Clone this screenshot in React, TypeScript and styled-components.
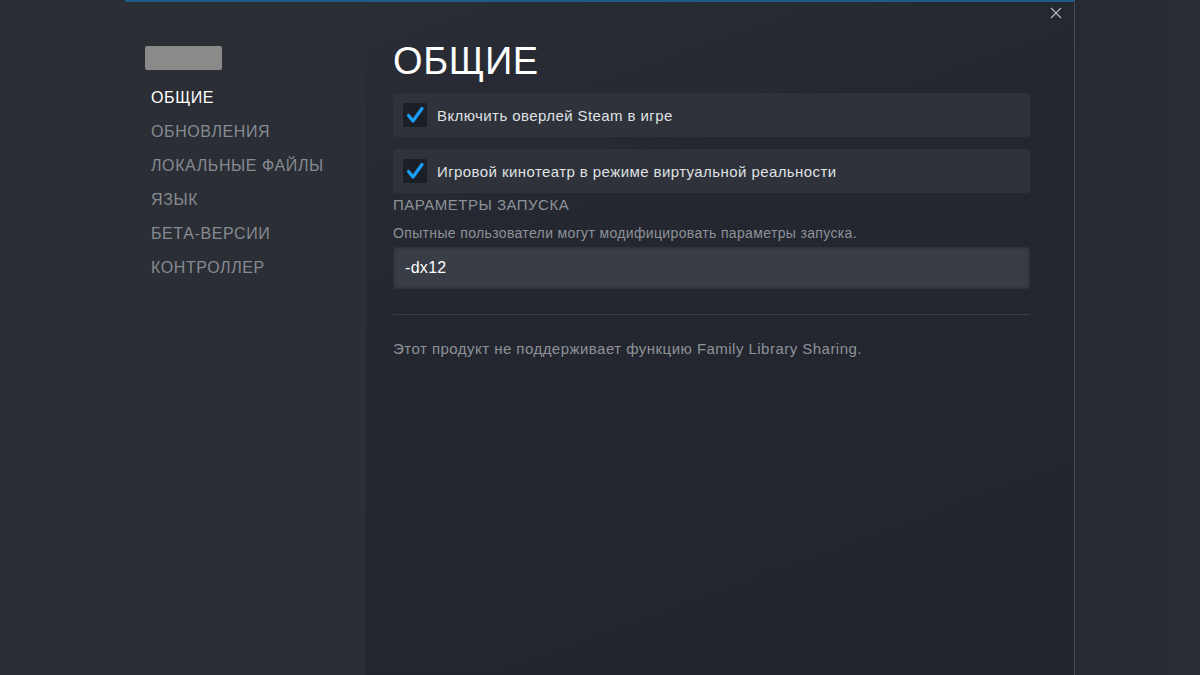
import { FC } from "react";
import styled, { createGlobalStyle } from "styled-components";

const GlobalStyle = createGlobalStyle`
  html, body { margin: 0; padding: 0; }
  body {
    width: 1200px;
    height: 675px;
    overflow: hidden;
    background: #282b31;
    font-family: "Liberation Sans", Arial, sans-serif;
  }
`;

const navItems = ["ОБЩИЕ", "ОБНОВЛЕНИЯ", "ЛОКАЛЬНЫЕ ФАЙЛЫ", "ЯЗЫК", "БЕТА-ВЕРСИИ", "КОНТРОЛЛЕР"];
const options = ["Включить оверлей Steam в игре", "Игровой кинотеатр в режиме виртуальной реальности"];

const Page = styled.div`
  display: flex;
  width: 1200px;
  height: 675px;
`;

const Backdrop = styled.div<{ $w: number; $bg: string }>`
  width: ${(p) => p.$w}px;
  flex-shrink: 0;
  background: ${(p) => p.$bg};
`;

const Dialog = styled.div`
  display: flex;
  width: 950px;
  height: 100%;
  flex-shrink: 0;
  border-top: 2px solid #1d5b88;
  border-right: 1px solid #464a52;
  box-sizing: border-box;
`;

const Nav = styled.nav`
  width: 241px;
  flex-shrink: 0;
  background: #2b2e34;
  padding: 44px 0 0 20px;
  box-sizing: border-box;
`;

const Blurred = styled.div`
  width: 77px;
  height: 24px;
  background: #8a8a8a;
  border-radius: 2px;
  filter: blur(0.6px);
  margin-bottom: 11px;
`;

const NavItem = styled.div<{ $active?: boolean }>`
  padding-left: 6px;
  height: 34px;
  line-height: 34px;
  font-size: 16px;
  letter-spacing: 0.6px;
  color: ${(p) => (p.$active ? "#ffffff" : "#868a91")};
`;

const Content = styled.main`
  position: relative;
  flex: 1;
  background: linear-gradient(160deg, #2a2d35 0%, #24272f 35%, #22252e 100%);
  padding: 36px 44px 0 27px;
  box-sizing: border-box;
`;

const Close = styled.div`
  position: absolute;
  top: 4px;
  right: 11px;
  width: 14px;
  height: 14px;
`;

const Title = styled.h1`
  margin: 0 0 9px;
  font-size: 38px;
  font-weight: 400;
  letter-spacing: 0.6px;
  line-height: 46px;
  color: #ffffff;
`;

const OptionRow = styled.div`
  display: flex;
  align-items: center;
  gap: 10px;
  height: 44px;
  padding-left: 10px;
  margin-bottom: 12px;
  background: #2f323a;
  border-radius: 3px;
`;

const Check = styled.div`
  width: 24px;
  height: 24px;
  background: #1c1f26;
  border-radius: 2px;
  display: flex;
  align-items: center;
  justify-content: center;
`;

const OptionText = styled.span`
  font-size: 15px;
  letter-spacing: 0.42px;
  color: #dfe1e3;
`;

const SectionLabel = styled.div`
  margin-top: -9px;
  font-size: 15px;
  letter-spacing: 0.5px;
  color: #8d9299;
  line-height: 18px;
`;

const Hint = styled.div`
  margin-top: 11px;
  font-size: 14px;
  color: #8d9299;
  line-height: 16px;
  letter-spacing: 0.35px;
`;

const Input = styled.div`
  margin-top: 6px;
  height: 42px;
  display: flex;
  align-items: center;
  padding-left: 12px;
  background: #393d46;
  border-radius: 3px;
  box-shadow: inset 0 0 4px rgba(20, 22, 27, 0.6);
  font-size: 16px;
  letter-spacing: 0.3px;
  color: #ffffff;
`;

const Divider = styled.hr`
  margin: 25px 0 0;
  border: none;
  border-top: 1px solid #3a3e46;
`;

const Note = styled.p`
  margin: 25px 0 0;
  font-size: 15px;
  line-height: 17px;
  color: #8d9299;
  letter-spacing: 0.47px;
`;

const CheckMark: FC = () => (
  <svg width="20" height="20" viewBox="0 0 20 20">
    <path d="M3.5 10.5 L8 16 L17 3.5" fill="none" stroke="#1a9fff" strokeWidth="3.2" strokeLinecap="round" strokeLinejoin="round" />
  </svg>
);

const App: FC = () => (
  <>
    <GlobalStyle />
    <Page>
      <Backdrop $w={125} $bg="linear-gradient(90deg, #2a2d33, #2b2e34)" />
      <Dialog>
        <Nav>
          <Blurred />
          {navItems.map((item, id) => (
            <NavItem key={item} $active={id === 0}>
              {item}
            </NavItem>
          ))}
        </Nav>
        <Content>
          <Close>
            <svg width="14" height="14" viewBox="0 0 14 14">
              <path d="M2 2 L12 12 M12 2 L2 12" stroke="#aeb1b6" strokeWidth="1.3" />
            </svg>
          </Close>
          <Title>ОБЩИЕ</Title>
          {options.map((o) => (
            <OptionRow key={o}>
              <Check>
                <CheckMark />
              </Check>
              <OptionText>{o}</OptionText>
            </OptionRow>
          ))}
          <SectionLabel>ПАРАМЕТРЫ ЗАПУСКА</SectionLabel>
          <Hint>Опытные пользователи могут модифицировать параметры запуска.</Hint>
          <Input>-dx12</Input>
          <Divider />
          <Note>Этот продукт не поддерживает функцию Family Library Sharing.</Note>
        </Content>
      </Dialog>
      <Backdrop $w={125} $bg="linear-gradient(90deg, #262a31, #2a2d33)" />
    </Page>
  </>
);

export default App;
